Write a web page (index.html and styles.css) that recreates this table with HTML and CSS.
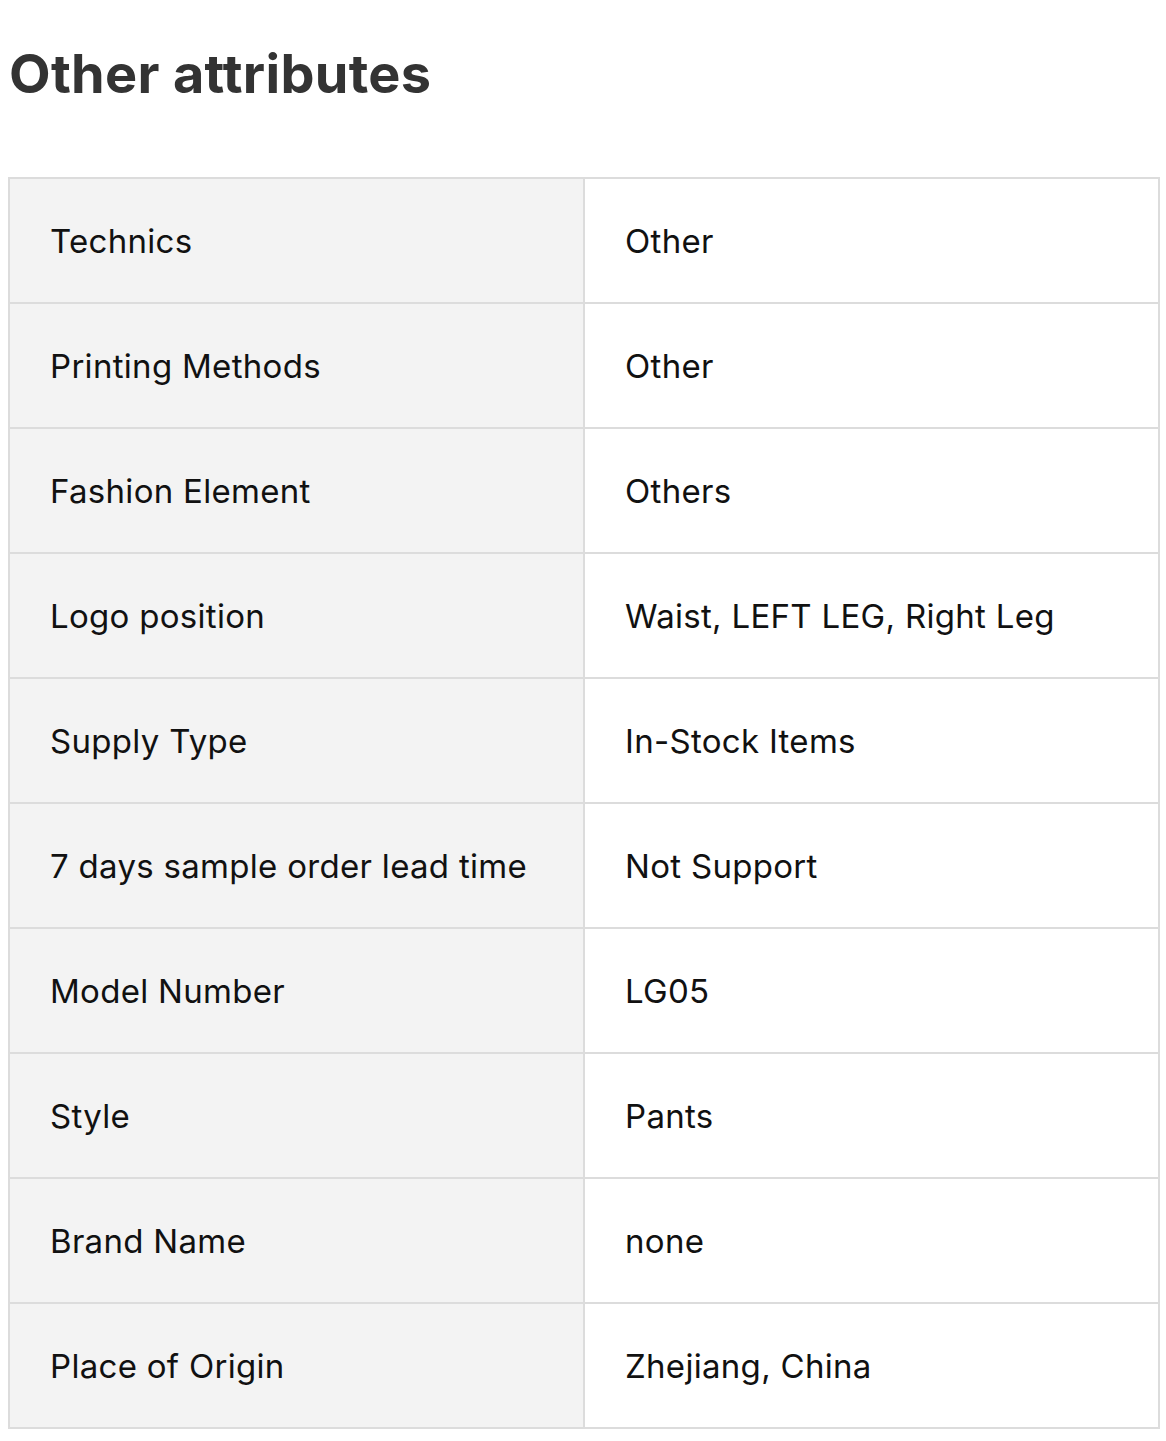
FILE: index.html
```html
<!DOCTYPE html>
<html lang="en">
<head>
    <meta charset="UTF-8">
    <meta name="viewport" content="width=device-width, initial-scale=1.0">
    <title>Other attributes</title>
    <link rel="stylesheet" href="styles.css">
</head>
<body>
    <div class="container">
        <h1>Other attributes</h1>
        <table class="attrs">
            <tr><td>Technics</td><td>Other</td></tr>
            <tr><td>Printing Methods</td><td>Other</td></tr>
            <tr><td>Fashion Element</td><td>Others</td></tr>
            <tr><td>Logo position</td><td>Waist, LEFT LEG, Right Leg</td></tr>
            <tr><td>Supply Type</td><td>In-Stock Items</td></tr>
            <tr><td>7 days sample order lead time</td><td>Not Support</td></tr>
            <tr><td>Model Number</td><td>LG05</td></tr>
            <tr><td>Style</td><td>Pants</td></tr>
            <tr><td>Brand Name</td><td>none</td></tr>
            <tr><td>Place of Origin</td><td>Zhejiang, China</td></tr>
        </table>
    </div>
</body>
</html>
```

FILE: styles.css
```css
body {
    font-family: Inter, "Noto Sans", sans-serif;
    background-color: #fff;
    margin: 0;
    padding: 0 6px 0 8px;
}

h1 {
    font-size: 54px;
    font-weight: 700;
    color: #333;
    letter-spacing: 0.3px;
    margin: 0;
    padding: 39px 0 0 1px;
    line-height: 70px;
}

.attrs {
    width: 100%;
    margin-top: 68px;
    border-collapse: collapse;
    table-layout: fixed;
    font-size: 33px;
    letter-spacing: 0.3px;
    color: #111;
}

.attrs td {
    height: 125px;
    padding: 0 40px;
    border: 2px solid #dcdcdc;
    box-sizing: border-box;
}

.attrs td:first-child {
    background-color: #f3f3f3;
}
```
